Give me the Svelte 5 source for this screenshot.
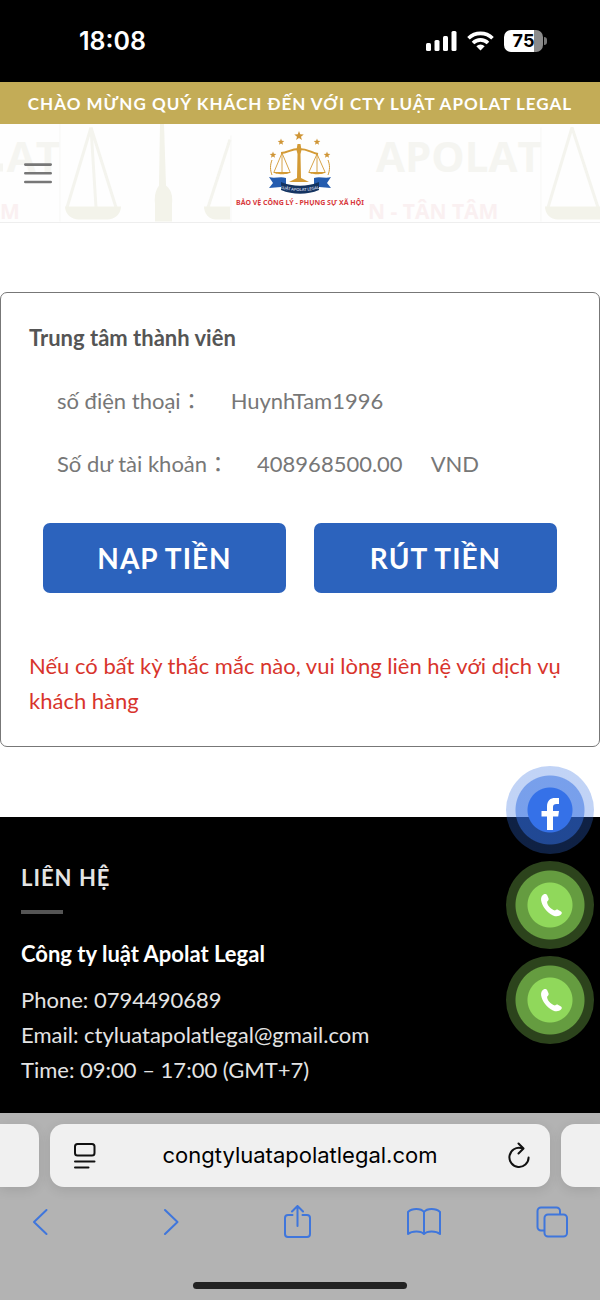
<script>
  // Account details shown in the member card
  const account = [
    { label: 'số điện thoại', value: 'HuynhTam1996', unit: '' },
    { label: 'Số dư tài khoản', value: '408968500.00', unit: 'VND' }
  ];

  const contact = [
    'Phone: 0794490689',
    'Email: ctyluatapolatlegal@gmail.com',
    'Time: 09:00 – 17:00 (GMT+7)'
  ];

  // Stars around the logo: x, y, radius
  const stars = [
    [64, 5, 5],
    [46, 11, 3.5],
    [82, 11, 3.5],
    [38, 24, 3.5],
    [92, 24, 3.5]
  ];

  function starPoints([cx, cy, r]) {
    const points = [];
    for (let i = 0; i < 10; i++) {
      const radius = i % 2 ? r * 0.42 : r;
      const angle = (Math.PI / 5) * i - Math.PI / 2;
      points.push(`${cx + radius * Math.cos(angle)},${cy + radius * Math.sin(angle)}`);
    }
    return points.join(' ');
  }
</script>

<div class="screen">
  <div class="status">
    <span class="time">18:08</span>
    <div class="indicators">
      <svg width="31" height="20" viewBox="0 0 31 20" fill="#fff">
        <rect x="0" y="12" width="5" height="8" rx="1.5" />
        <rect x="8.5" y="9" width="5" height="11" rx="1.5" />
        <rect x="17" y="5" width="5" height="15" rx="1.5" />
        <rect x="25.5" y="0" width="5" height="20" rx="1.5" />
      </svg>
      <svg width="27" height="20" viewBox="0 0 27 20" fill="none" stroke="#fff" stroke-width="3.6">
        <path d="M1.5 7.3a17 17 0 0 1 24 0" />
        <path d="M6 12a10.6 10.6 0 0 1 15 0" />
        <path d="M13.5 19.5l-4.2-4.3a6 6 0 0 1 8.4 0z" fill="#fff" stroke="none" />
      </svg>
      <div class="battery"><span>75</span></div>
    </div>
  </div>

  <div class="banner">CHÀO MỪNG QUÝ KHÁCH ĐẾN VỚI CTY LUẬT APOLAT LEGAL</div>

  <header>
    <svg class="backdrop" viewBox="0 0 600 99" preserveAspectRatio="xMidYMid slice" aria-hidden="true">
      <g class="ghost">
        <text x="60" y="48" text-anchor="end">AT</text>
        <path d="M0 40h3v8H0z" />
        <text x="376" y="48">APOLAT</text>
      </g>
      <g class="ghost motto">
        <text x="0" y="95">M</text>
        <text x="368" y="95">N - TÂN TÂM</text>
      </g>
      <g fill="none" stroke="#f4f4ee" stroke-width="3">
        <path d="M91 4L67 84M91 4l25 80M91 4l5 80" />
        <path d="M230 16L208 84" />
        <path d="M572 4l-24 80M572 4l26 80" />
        <path d="M60 0v98M231 12v86M541 4v94" stroke="#f7f7f5" stroke-width="1" />
      </g>
      <g fill="#f3f3ea">
        <path d="M65 83h56c0 7-6 13-14 13H79c-8 0-14-6-14-13z" />
        <path d="M204 83h26v13h-14c-7 0-12-6-12-13z" />
        <path d="M545 83h55v13h-42c-8 0-13-6-13-13z" />
        <path d="M160 0h4l2 62c5 4 7 10 6 18v18h-17V80c-1-8 1-14 4-18z" />
      </g>
    </svg>
    <button class="menu" aria-label="Menu">
      <svg width="28" height="22" viewBox="0 0 28 22" stroke="#777" stroke-width="2.6" stroke-linecap="round">
        <path d="M1.3 2.6h25.4M1.3 11.3h25.4M1.3 20h25.4" />
      </svg>
    </button>
    <a class="logo" href="#home" aria-label="Apolat Legal">
      <svg width="130" height="84" viewBox="0 0 130 84">
        {#each stars as star}
          <polygon points={starPoints(star)} fill="#cf9536" />
        {/each}
        <g fill="none" stroke="#d39a35">
          <path d="M46 22c7 0 9-4 18-4s11 3 19 5" stroke-width="2" />
          <path d="M47 22l-8 19M47 22l8 19M47 22v19M82 23l-8 18M82 23l8 18M82 23v18" stroke-width="0.9" />
          <path d="M37 29c-2 5-2 10 0 15M93 29c2 5 2 10 0 15" stroke-width="1" />
        </g>
        <g fill="#d39a35">
          <path d="M38 41h18c-2 3-16 3-18 0zM73 41h18c-2 3-16 3-18 0z" />
          <path d="M62.500 13h3l1 6-1 4 .5 24 8 4H54l8-4 .5-24-1-4z" />
        </g>
        <path d="M34 46c6 2 11-1 17 1v10c-5-2-11 0-17 0l4-5z" fill="#245caf" />
        <path d="M96 46c-6 2-11-1-17 1v10c5-2 11 0 17 0l-4-5z" fill="#245caf" />
        <path d="M46 51c12 5 26 5 38 0v8c-12 5-26 5-38 0z" fill="#143461" />
        <path id="ribbon" d="M44 57c13 4 29 4 42 0" fill="none" />
        <text class="ribbon-text"><textPath href="#ribbon" startOffset="50%" text-anchor="middle">LUẬT APOLAT LEGAL</textPath></text>
        <text class="slogan" x="65" y="74" text-anchor="middle">BẢO VỆ CÔNG LÝ - PHỤNG SỰ XÃ HỘI</text>
      </svg>
    </a>
  </header>

  <main>
    <section class="card">
      <h1>Trung tâm thành viên</h1>
      {#each account as row}
        <div class="row">
          <span>{row.label}<span class="colon">：</span></span>
          <span>{row.value}</span>
          {#if row.unit}<span>{row.unit}</span>{/if}
        </div>
      {/each}
      <div class="actions">
        <button>NẠP TIỀN</button>
        <button>RÚT TIỀN</button>
      </div>
      <p class="note">Nếu có bất kỳ thắc mắc nào, vui lòng liên hệ với dịch vụ khách hàng</p>
    </section>
  </main>

  <footer>
    <h2>LIÊN HỆ</h2>
    <div class="divider"></div>
    <h3>Công ty luật Apolat Legal</h3>
    {#each contact as line}
      <p>{line}</p>
    {/each}

    <!-- Floating contact buttons -->
    <div class="floating">
      <a class="bubble facebook" href="#facebook" aria-label="Facebook">
        <svg width="88" height="88" viewBox="0 0 88 88">
          <path d="M41 64V50.500h-5.500v-5.500H41v-4.500c0-6 3.500-8.500 8-8.500h4v6h-2.500c-2.300 0-3.500 1-3.500 3v4h6l-.8 5.500H47V64z" fill="#fff" />
        </svg>
      </a>
      {#each [1, 2] as n}
        <a class="bubble phone" href="tel:0794490689" aria-label="Phone {n}">
          <svg width="88" height="88" viewBox="0 0 88 88">
            <path d="M37.500 33.500c1.500-.8 3-.5 3.700.8l1.300 3c.4 1.200 0 2.200-1.300 3.200-.7 3 3.600 8 7.800 9 1.200-1.300 2.300-1.300 3.300-.6l2.700 1.700c1.200.8 1 2 0 3-2 2-5 2.200-8 .8-6-2.800-11-8.800-11.900-15.100-.3-2.600.6-4.800 2.400-5.800z" fill="#fff" />
          </svg>
        </a>
      {/each}
    </div>
  </footer>

  <div class="browser">
    <div class="tabs">
      <div class="tab side"></div>
      <div class="tab address">
        <button aria-label="Page settings">
          <svg width="28" height="28" viewBox="-4 0 28 28" fill="none" stroke="#111" stroke-width="2" stroke-linecap="round">
            <rect x="2" y="2" width="19.500" height="11.500" rx="2.500" />
            <path d="M2 19.500h19.500M2 25.500h13.500" />
          </svg>
        </button>
        <span class="url">congtyluatapolatlegal.com</span>
        <button aria-label="Reload">
          <svg width="28" height="28" viewBox="-4 0 28 28" fill="none" stroke="#111" stroke-width="2" stroke-linecap="round" stroke-linejoin="round">
            <path d="M14.500 6.100A9.600 9.600 0 1 0 21.600 15.500M11.500 1.500l5 5-5 5" />
          </svg>
        </button>
      </div>
      <div class="tab side"></div>
    </div>
    <nav>
      <button aria-label="Back">
        <svg width="34" height="34" viewBox="0 0 34 34"><path d="M22.500 5L10 17l12.500 12" /></svg>
      </button>
      <button aria-label="Forward">
        <svg width="34" height="34" viewBox="0 0 34 34"><path d="M13 5l12.500 12L13 29" /></svg>
      </button>
      <button aria-label="Share">
        <svg width="34" height="34" viewBox="0 0 34 34"><path d="M12.500 10H8a3 3 0 0 0-3 3v16a3 3 0 0 0 3 3h19a3 3 0 0 0 3-3V13a3 3 0 0 0-3-3h-4.500M17.500 21V1M12 6.500L17.500 1 23 6.500" /></svg>
      </button>
      <button aria-label="Bookmarks">
        <svg width="34" height="34" viewBox="0 0 34 34"><path d="M17 7c-3-4-12-4-16 0v22c4-3.500 13-3.500 16 0 3-3.500 12-3.500 16 0V7c-4-4-13-4-16 0zM17 7v22" /></svg>
      </button>
      <button aria-label="Tabs">
        <svg width="34" height="34" viewBox="0 0 34 34"><path d="M9 25.500H6a3.500 3.500 0 0 1-3.500-3.500V6A3.500 3.500 0 0 1 6 2.500h15.500A3.500 3.500 0 0 1 25 6v3" /><rect x="9.500" y="9.500" width="22.500" height="22" rx="3.500" /></svg>
      </button>
    </nav>
    <div class="home"></div>
  </div>
</div>

<style>
  :global(body) {
    margin: 0;
    background: #fff;
  }

  .screen {
    font-family: Lato, 'Noto Sans', sans-serif;
    font-size: 22px;
    line-height: 35px;
    color: #777;
  }

  h1, h2, h3, p {
    margin: 0;
    font-size: 22px;
  }

  button {
    font: inherit;
    border: 0;
    padding: 0;
    background: none;
    cursor: pointer;
  }

  svg {
    display: block;
  }

  .status {
    display: flex;
    justify-content: space-between;
    align-items: center;
    height: 82px;
    padding: 0 57px 0 79px;
    box-sizing: border-box;
    background: #000;
    color: #fff;
    font-family: Inter, sans-serif;
  }

  .time {
    font-size: 25px;
    font-weight: 600;
  }

  .indicators {
    display: flex;
    align-items: center;
    gap: 10px;
  }

  .battery {
    position: relative;
    width: 39px;
    height: 22px;
    border-radius: 7px;
    background: linear-gradient(90deg, #fff 77%, #8b8b8b 77%);
    color: #000;
    font-size: 18px;
    font-weight: 700;
    line-height: 22px;
    text-align: center;
  }

  .battery::after {
    content: '';
    position: absolute;
    top: 7px;
    right: -4px;
    width: 3px;
    height: 8px;
    border-radius: 0 4px 4px 0;
    background: #777;
  }

  .banner {
    padding: 4px 0 3px;
    background: #c3ac57;
    color: #fff;
    font-size: 17px;
    font-weight: 700;
    letter-spacing: 1px;
    text-align: center;
  }

  header {
    position: relative;
    display: grid;
    grid-template-columns: 1fr auto 1fr;
    align-items: center;
    height: 98px;
    padding: 0 24px;
    border-bottom: 1px solid #eee;
    background: #fefefe;
  }

  .backdrop {
    position: absolute;
    inset: 0;
    width: 100%;
    height: 100%;
  }

  .ghost {
    fill: #f5f5f1;
    font-family: 'Open Sans', sans-serif;
    font-size: 42px;
    font-weight: 700;
  }

  .motto {
    fill: #faf0f1;
    font-size: 21px;
  }

  .menu,
  .logo {
    position: relative;
    justify-self: start;
  }

  .ribbon-text {
    fill: #c9d3e4;
    font-size: 4px;
    font-weight: 700;
  }

  .slogan {
    fill: #d8393c;
    font-family: 'Noto Sans', sans-serif;
    font-size: 7px;
    font-weight: 700;
  }

  main {
    padding: 69px 0 70px;
  }

  .card {
    padding: 27px 28px 28px;
    border: 1px solid #777;
    border-radius: 7px;
  }

  h1 {
    color: #555;
  }

  .row {
    display: flex;
    gap: 28px;
    margin-top: 28px;
    padding-left: 28px;
  }

  .colon {
    font-family: 'Noto Sans CJK TC', sans-serif;
    line-height: 22px;
  }

  .actions {
    display: flex;
    gap: 28px;
    margin: 42px 14px 55px;
  }

  .actions button {
    flex: 1;
    height: 70px;
    border-radius: 7px;
    background: #2c63bd;
    color: #fff;
    font-size: 28px;
    font-weight: 700;
    letter-spacing: 1px;
  }

  .note {
    color: #d8342c;
  }

  footer {
    position: relative;
    padding: 43px 21px 26px;
    background: #000;
    color: #e4e4e4;
  }

  h2 {
    letter-spacing: 1px;
  }

  .divider {
    width: 42px;
    height: 4px;
    margin: 15px 0 22px;
    background: #555;
  }

  h3 {
    margin-bottom: 11px;
    color: #fff;
  }

  .floating {
    position: absolute;
    top: -51px;
    right: 6px;
    display: grid;
    gap: 7px;
  }

  .bubble {
    border-radius: 50%;
  }

  .facebook {
    background: radial-gradient(circle, #3571e8 0 22px, rgba(50, 110, 225, 0.66) 23px 34px, rgba(50, 110, 225, 0.3) 35px);
  }

  .phone {
    background: radial-gradient(circle, #90d85b 0 22px, #659c40 23px 34px, #2c431c 35px);
  }

  .browser {
    padding: 11px 0;
    background: #b3b3b3;
    font-family: Inter, sans-serif;
  }

  .tabs {
    display: flex;
    gap: 11px;
  }

  .tab {
    height: 63px;
    border-radius: 14px;
    background: #f0f0f0;
    box-shadow: 0 3px 12px rgba(0, 0, 0, 0.1);
  }

  .side {
    width: 39px;
  }

  .side:first-child {
    border-radius: 0 14px 14px 0;
  }

  .side:last-child {
    border-radius: 14px 0 0 14px;
  }

  .address {
    flex: 1;
    display: flex;
    justify-content: space-between;
    align-items: center;
    padding: 0 19px;
  }

  .url {
    color: #000;
    font-size: 22px;
  }

  nav {
    display: flex;
    justify-content: space-between;
    padding: 18px 31px 43px 24px;
  }

  nav svg {
    fill: none;
    stroke: #3f76dc;
    stroke-width: 2;
    stroke-linecap: round;
    stroke-linejoin: round;
  }

  .home {
    width: 214px;
    height: 7px;
    margin: 0 auto;
    border-radius: 4px;
    background: #222;
  }
</style>
